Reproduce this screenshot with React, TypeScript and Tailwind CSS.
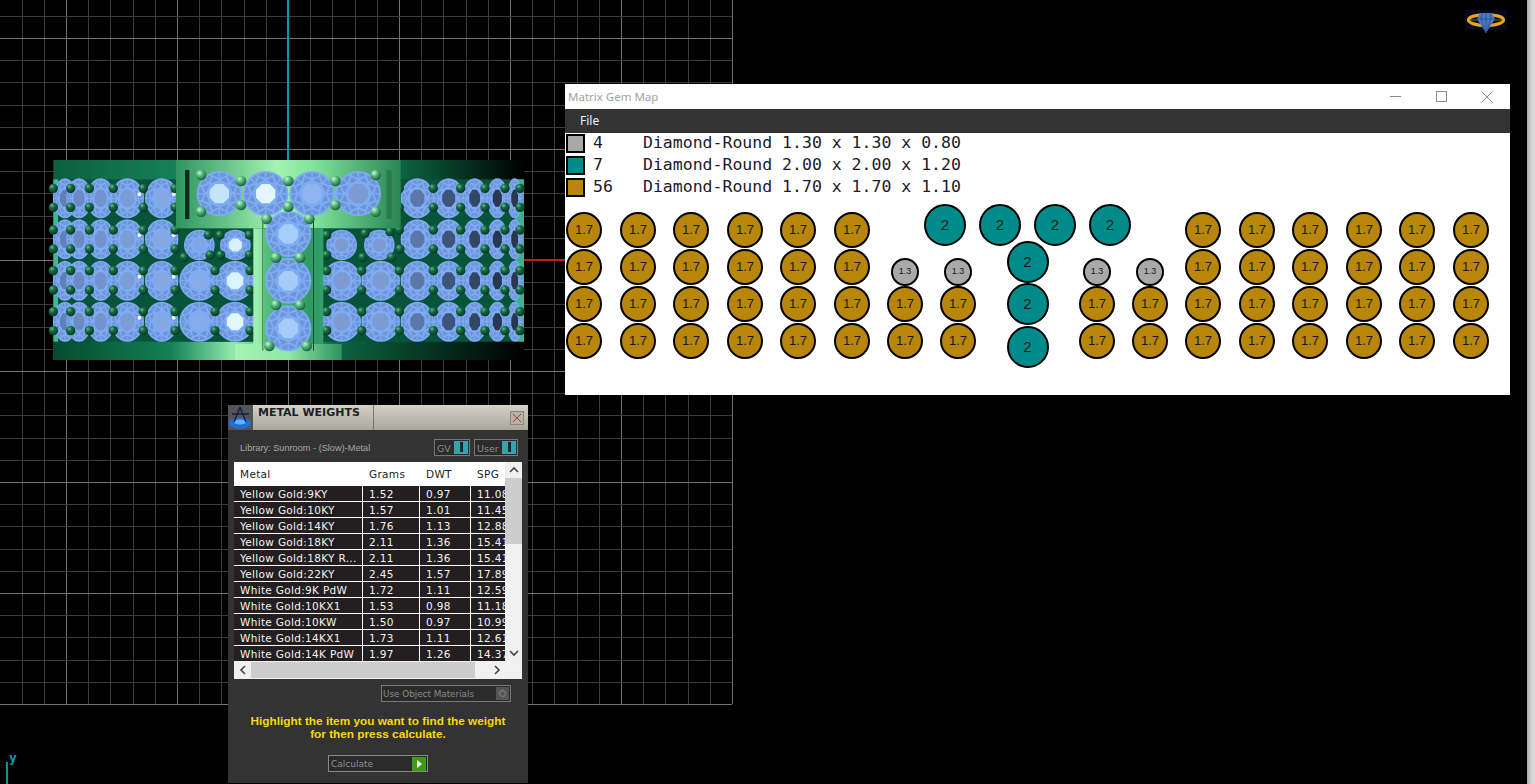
import React from "react";

const range = (a: number, b: number) => Array.from({ length: b - a + 1 }, (_, i) => a + i);

function Grid() {
  const xs = range(-2, 30);
  const ys = range(0, 31);
  return (
    <svg className="absolute left-0 top-0" width={734} height={706}>
      {xs.map((k) => {
        const x = Math.round(66 + k * 22.2) + 0.5;
        const major = ((k % 5) + 5) % 5 === 0;
        return <line key={k} x1={x} x2={x} y1={0} y2={704} stroke={major ? "#6e6e6e" : "#3a3a3a"} strokeWidth={1} />;
      })}
      {ys.map((j) => {
        const y = Math.round(704 - j * 22.2) + 0.5;
        const major = j % 5 === 0;
        return <line key={j} x1={0} x2={732} y1={y} y2={y} stroke={major ? "#747474" : "#3a3a3a"} strokeWidth={1} />;
      })}
    </svg>
  );
}

function Gem({ cx, cy, rx, ry, table = "#7f9fd6", shine = false }: { cx: number; cy: number; rx: number; ry: number; table?: string; shine?: boolean }) {
  const pt = (a: number, f: number) => `${(cx + Math.cos(a) * rx * f).toFixed(1)},${(cy + Math.sin(a) * ry * f).toFixed(1)}`;
  const n = 8;
  const step = (Math.PI * 2) / n;
  const facets: string[] = [];
  for (let i = 0; i < n; i++) {
    const a = i * step + step / 2;
    facets.push(`M${pt(a - step * 0.4, 0.6)} L${pt(a, 0.56)} L${pt(a + step * 0.4, 0.6)} L${pt(a, 0.78)} Z`);
    facets.push(`M${pt(a - step * 0.08, 0.92)} L${pt(a - step * 0.44, 0.92)} L${pt(a - step * 0.46, 0.7)} L${pt(a - step * 0.08, 0.84)} Z`);
    facets.push(`M${pt(a + step * 0.08, 0.92)} L${pt(a + step * 0.44, 0.92)} L${pt(a + step * 0.46, 0.7)} L${pt(a + step * 0.08, 0.84)} Z`);
  }
  const oct = range(0, 7).map((i) => pt(i * step + step / 2, 0.46)).join(" ");
  return (
    <g>
      <ellipse cx={cx} cy={cy} rx={rx} ry={ry} fill="#7dabf5" />
      <path d={facets.join(" ")} fill="#6f94d4" />
      <polygon points={oct} fill={table} />
      {shine && <circle cx={cx + rx * 0.72} cy={cy - ry * 0.2} r={6} fill="#f2f6ff" />}
    </g>
  );
}

function Ball({ x, y, r = 14, light = false }: { x: number; y: number; r?: number; light?: boolean }) {
  return <circle cx={x} cy={y} r={r} fill={light ? "url(#ballLight)" : "url(#ballDark)"} />;
}

function Ring() {
  const rows = [145, 268, 392, 515];
  const cols: [number, number, string][] = [
    [75, 36, "#6080b8"],
    [117, 38, "#6b8bc4"],
    [182, 42, "#7393cf"],
    [262, 50, "#7c9cd8"],
    [365, 50, "#86a8e2"],
    [1424, 24, "#28374d"],
    [1372, 32, "#283851"],
    [1304, 38, "#334664"],
    [1226, 46, "#3e5479"],
    [1132, 50, "#5d78a8"],
  ];
  const sideBallX = [40, 92, 148, 220, 310, 405, 1078, 1180, 1262, 1335, 1395, 1440];
  const ballRows = [115, 172, 240, 297, 362, 420, 485, 542];
  const inner: [number, number, number, string][] = [
    [478, 392, 60, "#86ace9"],
    [585, 392, 58, "#d9f3ff"],
    [478, 515, 60, "#86ace9"],
    [585, 515, 58, "#e3f7ff"],
    [905, 392, 58, "#7c9bd0"],
    [1022, 392, 58, "#7c9bd0"],
    [905, 515, 58, "#7c9bd0"],
    [1022, 515, 58, "#7c9bd0"],
  ];
  const innerBalls = [
    [525, 362], [525, 420], [525, 485], [525, 542], [630, 362], [630, 420], [630, 485], [630, 542],
    [860, 362], [860, 420], [860, 485], [860, 542], [965, 362], [965, 420], [965, 485], [965, 542],
    [505, 255], [540, 255], [628, 255], [432, 322], [510, 315], [542, 315], [628, 315],
    [860, 255], [860, 315], [975, 250], [1050, 245], [1080, 297], [1055, 322], [968, 322],
  ];
  const tBalls = [
    [483, 75], [483, 185], [603, 93], [603, 165], [745, 93], [745, 170], [886, 93], [886, 165],
    [1007, 75], [1007, 185], [680, 207], [808, 207], [708, 323], [780, 323], [708, 465], [780, 465], [688, 588], [800, 588],
  ];
  return (
    <svg className="absolute left-[40px] top-[150px]" width={500} height={220} viewBox="0 0 1500 660">
      <defs>
        <linearGradient id="band" x1="0" x2="1" y1="0" y2="0">
          <stop offset="0" stopColor="#0b5f3f" />
          <stop offset="0.26" stopColor="#16805a" />
          <stop offset="0.74" stopColor="#0c6444" />
          <stop offset="1" stopColor="#000000" />
        </linearGradient>
        <linearGradient id="bandBottom" x1="0" x2="1" y1="0" y2="0">
          <stop offset="0" stopColor="#054a30" />
          <stop offset="0.25" stopColor="#138056" />
          <stop offset="0.38" stopColor="#8ee9aa" />
          <stop offset="0.61" stopColor="#0c6444" />
          <stop offset="1" stopColor="#000000" />
        </linearGradient>
        <linearGradient id="plate" x1="0" x2="1" y1="0" y2="0">
          <stop offset="0" stopColor="#2f9460" />
          <stop offset="0.45" stopColor="#a4f3b2" />
          <stop offset="0.62" stopColor="#7ee29a" />
          <stop offset="1" stopColor="#2a8553" />
        </linearGradient>
        <linearGradient id="stem" x1="0" x2="1" y1="0" y2="0">
          <stop offset="0" stopColor="#a4f0b3" />
          <stop offset="0.15" stopColor="#8be6a2" />
          <stop offset="0.16" stopColor="#55c07f" />
          <stop offset="0.8" stopColor="#2f9a62" />
          <stop offset="1" stopColor="#33a06a" />
        </linearGradient>
        <linearGradient id="foot" x1="0" x2="1" y1="0" y2="0">
          <stop offset="0" stopColor="#a6f3b5" />
          <stop offset="0.5" stopColor="#8fe8a5" />
          <stop offset="1" stopColor="#2f9460" />
        </linearGradient>
        <radialGradient id="ballDark" cx="0.35" cy="0.3" r="0.75">
          <stop offset="0" stopColor="#5fbf8b" />
          <stop offset="0.35" stopColor="#176c46" />
          <stop offset="1" stopColor="#04331f" />
        </radialGradient>
        <radialGradient id="ballLight" cx="0.35" cy="0.3" r="0.75">
          <stop offset="0" stopColor="#c6f5d0" />
          <stop offset="0.45" stopColor="#4fb277" />
          <stop offset="1" stopColor="#14583a" />
        </radialGradient>
      </defs>
      <rect x={40} y={30} width={1412} height={600} fill="url(#band)" />
      <rect x={40} y={575} width={1412} height={55} fill="url(#bandBottom)" />
      <rect x={40} y={88} width={1412} height={487} fill="#07543a" />
      <rect x={40} y={88} width={14} height={487} fill="#43b795" />
      <rect x={1425} y={88} width={27} height={487} fill="#3fb090" />
      {rows.map((y) =>
        cols.map(([x, rx, t]) => (
          <Gem key={`${x}-${y}`} cx={x} cy={y} rx={rx} ry={60} table={t} shine={x === 262 || x === 365} />
        )),
      )}
      <Gem cx={478} cy={285} rx={46} ry={46} table="#7fa6e8" />
      <Gem cx={586} cy={285} rx={46} ry={46} table="#d7f1ff" />
      <Gem cx={905} cy={285} rx={46} ry={46} table="#7c9bd0" />
      <Gem cx={1018} cy={285} rx={46} ry={46} table="#7c9bd0" />
      {inner.map(([x, y, rx, t], i) => (
        <Gem key={i} cx={x} cy={y} rx={rx} ry={60} table={t} />
      ))}
      {sideBallX.map((x) => ballRows.map((y) => <Ball key={`${x}-${y}`} x={x} y={y} r={14} />))}
      {innerBalls.map(([x, y]) => <Ball key={`${x}-${y}`} x={x} y={y} r={14} />)}
      <rect x={408} y={30} width={674} height={205} fill="url(#plate)" />
      <rect x={640} y={235} width={210} height={395} fill="url(#stem)" />
      <rect x={585} y={582} width={320} height={48} fill="url(#foot)" />
      <rect x={435} y={60} width={13} height={147} fill="#0d2a1c" />
      <rect x={1040} y={60} width={15} height={147} fill="#2a7a4d" />
      <rect x={667} y={212} width={3} height={390} fill="#3e5a48" />
      <rect x={819} y={212} width={3} height={390} fill="#0f4a30" />
      <Gem cx={538} cy={131} rx={68} ry={68} table="#c3e4fb" />
      <Gem cx={677} cy={131} rx={68} ry={68} table="#e3f6ff" />
      <Gem cx={816} cy={131} rx={68} ry={68} table="#8fb4ee" />
      <Gem cx={955} cy={131} rx={68} ry={68} table="#7b9bd2" />
      <Gem cx={745} cy={252} rx={69} ry={69} table="#a5cdf8" />
      <Gem cx={745} cy={392} rx={69} ry={69} table="#a5cdf8" />
      <Gem cx={745} cy={535} rx={69} ry={69} table="#a5cdf8" />
      {tBalls.map(([x, y]) => <Ball key={`${x}-${y}`} x={x} y={y} r={16} light />)}
    </svg>
  );
}

function Logo() {
  return (
    <svg className="absolute left-[1464px] top-[9px]" width={44} height={26} viewBox="0 0 44 26">
      <rect x={1} y={1} width={42} height={20} fill="#08081a" />
      <ellipse cx={22} cy={11} rx={17.5} ry={5.5} fill="none" stroke="#e3a41f" strokeWidth={3.2} />
      <path d="M7 11h30" stroke="#6b5214" strokeWidth={1.2} />
      <path d="M16 4h12l3 6-9 14-9-14z" fill="#4a78c2" />
      <path d="M13 10h18M18 4l-1 6 5 14 5-14-1-6M22 4v20" stroke="#2b4a8e" strokeWidth={0.8} fill="none" />
    </svg>
  );
}

const metals: [string, string, string, string][] = [
  ["Yellow Gold:9KY", "1.52", "0.97", "11.08"],
  ["Yellow Gold:10KY", "1.57", "1.01", "11.45"],
  ["Yellow Gold:14KY", "1.76", "1.13", "12.88"],
  ["Yellow Gold:18KY", "2.11", "1.36", "15.41"],
  ["Yellow Gold:18KY R...", "2.11", "1.36", "15.41"],
  ["Yellow Gold:22KY", "2.45", "1.57", "17.89"],
  ["White Gold:9K PdW", "1.72", "1.11", "12.59"],
  ["White Gold:10KX1", "1.53", "0.98", "11.18"],
  ["White Gold:10KW", "1.50", "0.97", "10.99"],
  ["White Gold:14KX1", "1.73", "1.11", "12.61"],
  ["White Gold:14K PdW", "1.97", "1.26", "14.37"],
];

function Toggle({ label, w }: { label: string; w: string }) {
  return (
    <div className={`flex h-[17px] items-stretch justify-between border border-[#777] bg-[#2b2b2b] pl-[2px] pr-[1px] py-[1px] ${w}`}>
      <span className="text-[9.5px] leading-[16px] text-[#8d8d8d] [font-family:'DejaVu_Sans',sans-serif]">{label}</span>
      <span className="flex w-[14px] items-center justify-center bg-[#35a3ad]">
        <span className="h-[10px] w-[3px] bg-[#14262a]" />
      </span>
    </div>
  );
}

function Chevron({ d }: { d: string }) {
  return (
    <svg width={10} height={10} viewBox="0 0 10 10" fill="none" stroke="#444" strokeWidth={1.6}>
      <path d={d} />
    </svg>
  );
}

function MetalWeights() {
  const cellCols = "grid grid-cols-[129px_57px_51px_34px]";
  return (
    <div className="absolute left-[228px] top-[405px] flex h-[378px] w-[300px] flex-col bg-[#333333] [font-family:'DejaVu_Sans',sans-serif]">
      <div className="flex h-[25px] items-stretch bg-gradient-to-b from-[#d4d2c4] to-[#a9a79a]">
        <div className="w-[25px] bg-[#555]">
          <svg width={25} height={25} viewBox="0 0 25 25">
            <ellipse cx={12} cy={18} rx={11} ry={5.5} fill="#1f6fe0" />
            <ellipse cx={12} cy={17} rx={6} ry={2.6} fill="#5cb6ff" />
            <path d="M12 2 6 17M12 2l6 15M4 9h17" stroke="#10233f" strokeWidth={1.4} fill="none" />
          </svg>
        </div>
        <div className="flex w-[121px] items-start border-r border-[#77756a] pl-[5px] pt-[1px] text-[11px] font-bold leading-[14px] text-[#20202a]">
          METAL WEIGHTS
        </div>
        <div className="flex flex-1 items-center justify-end pr-[4px]">
          <span className="flex h-[14px] w-[14px] items-center justify-center border border-[#888] bg-[#b5b3a8]">
            <svg width={10} height={10} viewBox="0 0 10 10" stroke="#c8322a" strokeWidth={1}>
              <path d="M1 1l8 8M9 1l-8 8" />
            </svg>
          </span>
        </div>
      </div>
      <div className="flex h-[32px] items-center justify-between pl-[12px] pr-[10px] pt-[2px]">
        <span className="mt-[4px] text-[9.2px] text-[#a8a8a8] [font-family:'Liberation_Sans',sans-serif]">Library: Sunroom - (Slow)-Metal</span>
        <div className="flex gap-[4px]">
          <Toggle label="GV" w="w-[36px]" />
          <Toggle label="User" w="w-[44px]" />
        </div>
      </div>
      <div className="mx-[6px] flex h-[217px] w-[288px] flex-col bg-white text-[10.5px] tracking-[0.32px]">
        <div className="flex h-[199px]">
          <div className="w-[271px] overflow-hidden">
            <div className={`${cellCols} h-[24px] items-center pt-[1px] text-[#222]`}>
              <span className="pl-[6px]">Metal</span>
              <span className="pl-[6px]">Grams</span>
              <span className="pl-[6px]">DWT</span>
              <span className="pl-[6px]">SPG</span>
            </div>
            {metals.map((m) => (
              <div key={m[0]} className={`${cellCols} h-[16px] border-b border-white`}>
                {m.map((c, i) => (
                  <span key={i} className={`overflow-hidden whitespace-nowrap bg-[#231f20] pl-[6px] pt-[1px] leading-[15px] text-[#f2f2f2] ${i < 3 ? "border-r border-white" : ""}`}>
                    {c}
                  </span>
                ))}
              </div>
            ))}
          </div>
          <div className="flex w-[17px] flex-col items-center bg-[#f0f0f0]">
            <div className="flex h-[16px] items-center">
              <Chevron d="M1 7l4-4 4 4" />
            </div>
            <div className="h-[66px] w-[17px] bg-[#cdcdcd]" />
            <div className="flex-1" />
            <div className="flex h-[16px] items-center">
              <Chevron d="M1 3l4 4 4-4" />
            </div>
          </div>
        </div>
        <div className="flex h-[18px] items-center bg-[#f0f0f0]">
          <div className="flex w-[17px] justify-center">
            <Chevron d="M7 1 3 5l4 4" />
          </div>
          <div className="h-[16px] w-[224px] bg-[#cdcdcd]" />
          <div className="flex flex-1 justify-end pr-[20px]">
            <Chevron d="M3 1l4 4-4 4" />
          </div>
        </div>
      </div>
      <div className="mr-[17px] mt-[6px] flex justify-end">
        <div className="flex h-[17px] w-[130px] items-center justify-between border border-[#777] bg-[#2b2b2b] pl-[1px] pr-[1px]">
          <span className="pt-[2px] text-[8.8px] text-[#8a8a8a]">Use Object Materials</span>
          <span className="flex h-[13px] w-[13px] items-center justify-center bg-[#555]">
            <span className="h-[7px] w-[7px] rounded-full border border-[#888]" />
          </span>
        </div>
      </div>
      <div className="mt-[13px] px-[2px] text-center text-[11.8px] font-bold leading-[13px] text-[#f5d90a] [font-family:'Liberation_Sans',sans-serif]">
        Highlight the item you want to find the weight
        <br />
        for then press calculate.
      </div>
      <div className="mt-[14px] flex justify-center">
        <div className="flex h-[17px] w-[100px] items-center justify-between border border-[#888] bg-[#2a2a2a] pl-[2px] pr-[1px]">
          <span className="pt-[2px] text-[9px] text-[#8e8e8e]">Calculate</span>
          <span className="flex h-[14px] w-[14px] items-center justify-center bg-[#3f9a18]">
            <span className="h-0 w-0 border-y-[4px] border-l-[5px] border-y-transparent border-l-white" />
          </span>
        </div>
      </div>
    </div>
  );
}

const GOLD = "#b8860b";
const TEAL = "#008b8b";
const GRAY = "#a9a9a9";

type Node = { x: number; y: number; r: number; c: string; t: string; s: string };

function buildNodes(): Node[] {
  const out: Node[] = [];
  const cols = [584, 638, 691, 745, 798, 852, 1203, 1257, 1310, 1364, 1417, 1471];
  [230, 267, 304, 341].forEach((y) => cols.forEach((x) => out.push({ x, y, r: 18, c: GOLD, t: "1.7", s: "text-[13px]" })));
  [905, 958, 1097, 1150].forEach((x) => {
    out.push({ x, y: 304, r: 18, c: GOLD, t: "1.7", s: "text-[13px]" });
    out.push({ x, y: 341, r: 18, c: GOLD, t: "1.7", s: "text-[13px]" });
    out.push({ x, y: 272, r: 14, c: GRAY, t: "1.3", s: "text-[9px]" });
  });
  [
    [945, 225],
    [1000, 225],
    [1055, 225],
    [1110, 225],
    [1027.5, 262],
    [1027.5, 304],
    [1027.5, 347],
  ].forEach(([x, y]) => out.push({ x, y, r: 21, c: TEAL, t: "2", s: "text-[15px]" }));
  return out;
}

const legend = [
  { c: "bg-[#a9a9a9]", n: "4", d: "Diamond-Round 1.30 x 1.30 x 0.80" },
  { c: "bg-[#008b8b]", n: "7", d: "Diamond-Round 2.00 x 2.00 x 1.20" },
  { c: "bg-[#b8860b]", n: "56", d: "Diamond-Round 1.70 x 1.70 x 1.10" },
];

function GemMap() {
  return (
    <div className="absolute left-[565px] top-[84px] flex h-[311px] w-[945px] flex-col bg-white">
      <div className="flex h-[25px] items-center justify-between">
        <span className="pl-[3px] text-[11.5px] text-[#a2a2a2] [font-family:'Noto_Sans',sans-serif]">Matrix Gem Map</span>
        <div className="flex items-center">
          <span className="flex w-[46px] justify-center">
            <span className="h-px w-[11px] bg-[#8a8a8a]" />
          </span>
          <span className="flex w-[46px] justify-center">
            <span className="h-[11px] w-[11px] border border-[#8a8a8a]" />
          </span>
          <span className="flex w-[46px] justify-center">
            <svg width={12} height={12} viewBox="0 0 12 12" stroke="#8a8a8a" strokeWidth={1}>
              <path d="M.5.5l11 11M11.5.5l-11 11" />
            </svg>
          </span>
        </div>
      </div>
      <div className="flex h-[24px] items-center bg-[#333333] pl-[15px] text-[12px] text-[#f0f0f0] [font-family:'Noto_Sans',sans-serif]">File</div>
      <div className="flex flex-col gap-[3px] pt-[1px]">
        {legend.map((l) => (
          <div key={l.n} className="flex h-[19px] items-center text-[16.5px] text-[#1a1a2a] [font-family:'DejaVu_Sans_Mono',monospace]">
            <span className={`ml-[1px] h-[19px] w-[19px] border-2 border-black ${l.c}`} />
            <span className="ml-[8px] w-[50px]">{l.n}</span>
            <span>{l.d}</span>
          </div>
        ))}
      </div>
      <div className="relative flex-1">
        {buildNodes().map((n, i) => (
          <div
            key={i}
            className={`absolute flex items-center justify-center rounded-full border-2 border-black text-[#1a1a1a] [font-family:'Liberation_Sans',sans-serif] ${n.s}`}
            style={{
              left: n.x - n.r - 565,
              top: n.y - n.r - 197,
              width: n.r * 2,
              height: n.r * 2,
              backgroundColor: n.c,
            }}
          >
            {n.t}
          </div>
        ))}
      </div>
    </div>
  );
}

export default function App() {
  return (
    <div className="relative h-[784px] w-[1535px] overflow-hidden bg-black">
      <Grid />
      <div className="absolute left-[287px] top-0 h-[160px] w-[2px] bg-[#0a97ad]" />
      <div className="absolute left-[524px] top-[259px] h-[2px] w-[41px] bg-[#c81818]" />
      <Ring />
      <div className="absolute left-[6px] top-[762px] h-[22px] w-[2px] bg-[#0d8ea0]" />
      <div className="absolute left-[9px] top-[750px] text-[13px] font-bold leading-[16px] text-[#0d97aa] [font-family:'DejaVu_Sans_Mono',monospace]">y</div>
      <Logo />
      <div className="absolute left-[1527px] top-0 h-[784px] w-[8px] bg-gradient-to-r from-[#a8a8a8] via-[#cfcfcf] to-[#dedede]" />
      <GemMap />
      <MetalWeights />
    </div>
  );
}
